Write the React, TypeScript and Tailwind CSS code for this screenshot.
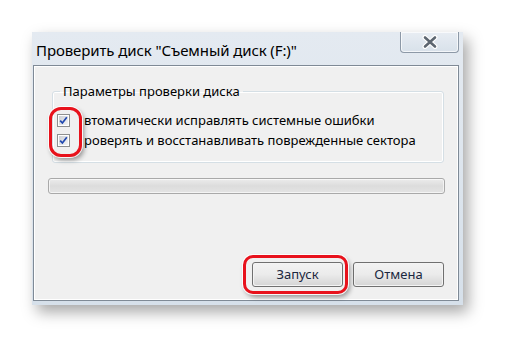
import React from "react";

function CheckBox() {
  return (
    <div className="w-[13px] h-[13px] border border-[#8e8f8f] bg-white p-[1px] shrink-0">
      <div className="w-full h-full bg-gradient-to-br from-[#cbcfd5] to-[#f6f6f6] flex items-center justify-center">
        <svg width="9" height="9" viewBox="0 0 9 9">
          <path d="M1.2 4.6 L3.4 7 L7.8 1.3" fill="none" stroke="#2148b0" strokeWidth="1.7" />
        </svg>
      </div>
    </div>
  );
}

function Btn({ label }: { label: string }) {
  return (
    <div className="w-[91px] h-[25px] rounded-[3px] border border-[#707070] p-[1px] bg-[#f4f4f4]">
      <div className="w-full h-full rounded-[2px] bg-gradient-to-b from-[#f2f2f2] via-[#ebebeb] to-[#d6d6d6] flex items-center justify-center text-[13px] text-[#1b2840] leading-none">
        {label}
      </div>
    </div>
  );
}

export default function App() {
  return (
    <div className="w-[508px] h-[339px] bg-white pt-[32px] pl-[32px] relative font-['Noto_Sans',sans-serif] overflow-hidden">
      <div className="w-[431px] h-[273px] bg-gradient-to-b from-[#e4eaf1] to-[#d6e0ea] flex flex-col shadow-[5px_7px_14px_rgba(0,0,0,0.35)]">
        <div className="h-[33px] flex items-start justify-between pl-[4px] shrink-0">
          <span className="text-[15px] leading-[18px] text-black mt-[9px] tracking-[-0.1px]">
            Проверить диск "Съемный диск (F:)"
          </span>
          <div className="w-[59px] h-[21px] mr-[4px] rounded-b-[4px] border-x border-b border-[#8d99a7] bg-gradient-to-b from-[#e8edf3] to-[#d8e1ea] shadow-[inset_0_0_0_1px_rgba(255,255,255,0.7)] flex items-center justify-center">
            <svg width="16" height="14" viewBox="0 0 16 14">
              <path d="M3 2.5 L13 11.5 M13 2.5 L3 11.5" stroke="#ffffff" strokeWidth="5" strokeLinecap="round" />
              <path d="M3 2.5 L13 11.5 M13 2.5 L3 11.5" stroke="#5d6670" strokeWidth="2.6" strokeLinecap="round" />
            </svg>
          </div>
        </div>
        <div className="flex-1 ml-[1px] mr-[4px] mb-[4px] border border-[#7f8a96] bg-[#f0f0f0] shadow-[inset_0_0_0_1px_#ffffff] px-[14px] flex flex-col">
          <fieldset className="ml-[4px] w-[392px] mt-[17px] border border-[#d5dfe5] rounded-[3px] shadow-[inset_0_0_0_1px_#ffffff] pl-[4px] pt-[11px] pb-[12px]">
            <legend className="ml-[3px] px-[3px] text-[13px] leading-[16px] text-black">
              Параметры проверки диска
            </legend>
            <div className="h-[20px] flex items-center gap-[14px]">
              <CheckBox />
              <span className="text-[13px] leading-none text-black">втоматически исправлять системные ошибки</span>
            </div>
            <div className="h-[20px] flex items-center gap-[14px]">
              <CheckBox />
              <span className="text-[13px] leading-none text-black">роверять и восстанавливать поврежденные сектора</span>
            </div>
          </fieldset>
          <div className="mt-[15px] w-[397px] h-[16px] rounded-[3px] border border-[#a9a9a9] bg-gradient-to-b from-[#ececec] via-[#dcdcdc] to-[#e4e4e4] shadow-[inset_0_0_0_1px_rgba(255,255,255,0.6)]" />
          <div className="mt-[68px] flex justify-end gap-[10px]">
            <Btn label="Запуск" />
            <Btn label="Отмена" />
          </div>
        </div>
      </div>
      <div className="absolute left-[49px] top-[107px] w-[33px] h-[50px] rounded-[12px] border-[3px] border-[#e8121c] shadow-[0_0_0_1px_rgba(255,255,255,0.9),2px_3px_5px_rgba(0,0,0,0.4)]" />
      <div className="absolute left-[243px] top-[255px] w-[105px] h-[39px] rounded-[10px] border-[3px] border-[#e8121c] shadow-[0_0_0_1px_rgba(255,255,255,0.9),2px_3px_5px_rgba(0,0,0,0.4)]" />
    </div>
  );
}
